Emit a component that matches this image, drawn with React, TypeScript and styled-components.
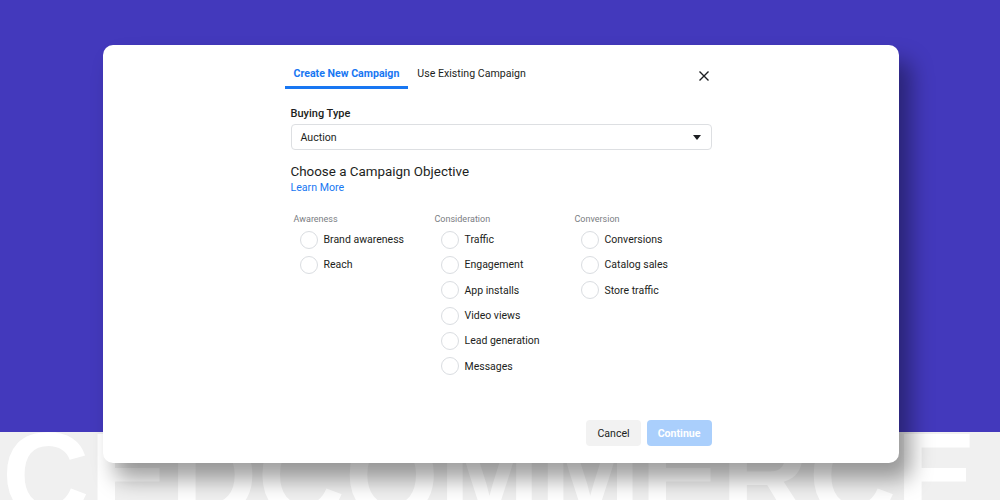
import React from "react";
import styled, { createGlobalStyle } from "styled-components";

const Global = createGlobalStyle`
  html, body { margin: 0; padding: 0; }
  body { font-family: Roboto, "Helvetica Neue", Arial, sans-serif; }
  * { box-sizing: border-box; }
`;

const Page = styled.div`
  position: relative;
  width: 1000px;
  height: 500px;
  overflow: hidden;
  display: flex;
  flex-direction: column;
`;

const Purple = styled.div`
  height: 432px;
  background: #4339bc;
  flex: none;
`;

const Band = styled.div`
  flex: 1;
  background: #f0f0f0;
  overflow: hidden;
`;

const BigWord = styled.div`
  font-family: "Liberation Sans", Arial, sans-serif;
  font-weight: 700;
  font-size: 121px;
  line-height: 120px;
  margin-top: -17px;
  margin-left: 2px;
  color: #ffffff;
  white-space: nowrap;
`;

const Modal = styled.div`
  position: absolute;
  left: 103px;
  top: 45px;
  width: 796px;
  height: 418px;
  background: #ffffff;
  border-radius: 10px;
  box-shadow: 12px 16px 22px rgba(0, 0, 0, 0.38);
  display: flex;
  flex-direction: column;
  padding: 16px 0 17px;
`;

const Inner = styled.div`
  width: 421px;
  margin: 0 auto;
  display: flex;
  flex-direction: column;
  flex: 1;
`;

const TabRow = styled.div`
  display: flex;
  align-items: stretch;
  margin-left: -6px;
  height: 28px;
`;

const Tab = styled.div<{ $active?: boolean }>`
  padding: 0 9px;
  font-size: 10.6px;
  font-weight: ${(p) => (p.$active ? 700 : 400)};
  color: ${(p) => (p.$active ? "#1877f2" : "#1c1e21")};
  display: flex;
  align-items: center;
  padding-bottom: 1px;
  border-bottom: 3px solid ${(p) => (p.$active ? "#1877f2" : "transparent")};
`;

const Close = styled.button`
  margin-left: auto;
  margin-right: -1px;
  background: none;
  border: none;
  padding: 0;
  width: 18px;
  display: flex;
  align-items: center;
  justify-content: center;
  padding-top: 2px;
`;

const FieldLabel = styled.div`
  margin-top: 18px;
  font-size: 11px;
  font-weight: 500;
  color: #1c1e21;
  line-height: 14px;
`;

const Select = styled.div`
  margin-top: 3px;
  height: 26px;
  border: 1px solid #dddfe2;
  border-radius: 4px;
  display: flex;
  align-items: center;
  padding: 0 10px 0 9px;
  font-size: 10.6px;
  color: #1c1e21;
`;

const Caret = styled.span`
  margin-left: auto;
  width: 0;
  height: 0;
  border-left: 4px solid transparent;
  border-right: 4px solid transparent;
  border-top: 5px solid #1c1e21;
`;

const Heading = styled.div`
  margin-top: 13px;
  font-size: 13.4px;
  color: #1c1e21;
  line-height: 17px;
`;

const Link = styled.a`
  font-size: 10.6px;
  color: #1877f2;
  line-height: 14px;
  margin-top: 1px;
  text-decoration: none;
`;

const Columns = styled.div`
  margin-top: 19px;
  margin-left: 3px;
  display: grid;
  grid-template-columns: 141px 140px 1fr;
`;

const Column = styled.div`
  display: flex;
  flex-direction: column;
`;

const CatLabel = styled.div`
  font-size: 9px;
  color: #7a7d82;
  line-height: 11px;
  margin-bottom: 2px;
`;

const Option = styled.label`
  display: flex;
  align-items: center;
  height: 25.3px;
  padding-left: 6px;
  font-size: 10.5px;
  color: #1c1e21;
`;

const Radio = styled.span`
  width: 18px;
  height: 18px;
  border-radius: 50%;
  border: 1.5px solid #dadde1;
  margin-right: 6px;
  flex: none;
`;

const Footer = styled.div`
  margin-top: auto;
  display: flex;
  justify-content: flex-end;
  gap: 6px;
`;

const Button = styled.button<{ $primary?: boolean }>`
  height: 26px;
  border: none;
  border-radius: 4px;
  padding: 0 11px;
  font-family: Roboto, "Helvetica Neue", Arial, sans-serif;
  font-size: 10.6px;
  font-weight: ${(p) => (p.$primary ? 700 : 400)};
  color: ${(p) => (p.$primary ? "#ffffff" : "#1c1e21")};
  background: ${(p) => (p.$primary ? "#aacffc" : "#f2f2f2")};
`;

const columns = [
  { title: "Awareness", items: ["Brand awareness", "Reach"] },
  {
    title: "Consideration",
    items: ["Traffic", "Engagement", "App installs", "Video views", "Lead generation", "Messages"],
  },
  { title: "Conversion", items: ["Conversions", "Catalog sales", "Store traffic"] },
];

export default function App() {
  return (
    <Page>
      <Global />
      <Purple />
      <Band>
        <BigWord>CEDCOMMERCE</BigWord>
      </Band>
      <Modal>
        <Inner>
          <TabRow>
            <Tab $active>Create New Campaign</Tab>
            <Tab>Use Existing Campaign</Tab>
            <Close aria-label="Close">
              <svg width="12" height="12" viewBox="0 0 12 12">
                <path d="M1.5 1.5 L10.5 10.5 M10.5 1.5 L1.5 10.5" stroke="#1c1e21" strokeWidth="1.4" fill="none" />
              </svg>
            </Close>
          </TabRow>
          <FieldLabel>Buying Type</FieldLabel>
          <Select>
            Auction
            <Caret />
          </Select>
          <Heading>Choose a Campaign Objective</Heading>
          <Link href="#">Learn More</Link>
          <Columns>
            {columns.map((c) => (
              <Column key={c.title}>
                <CatLabel>{c.title}</CatLabel>
                {c.items.map((it) => (
                  <Option key={it}>
                    <Radio />
                    {it}
                  </Option>
                ))}
              </Column>
            ))}
          </Columns>
          <Footer>
            <Button>Cancel</Button>
            <Button $primary>Continue</Button>
          </Footer>
        </Inner>
      </Modal>
    </Page>
  );
}
